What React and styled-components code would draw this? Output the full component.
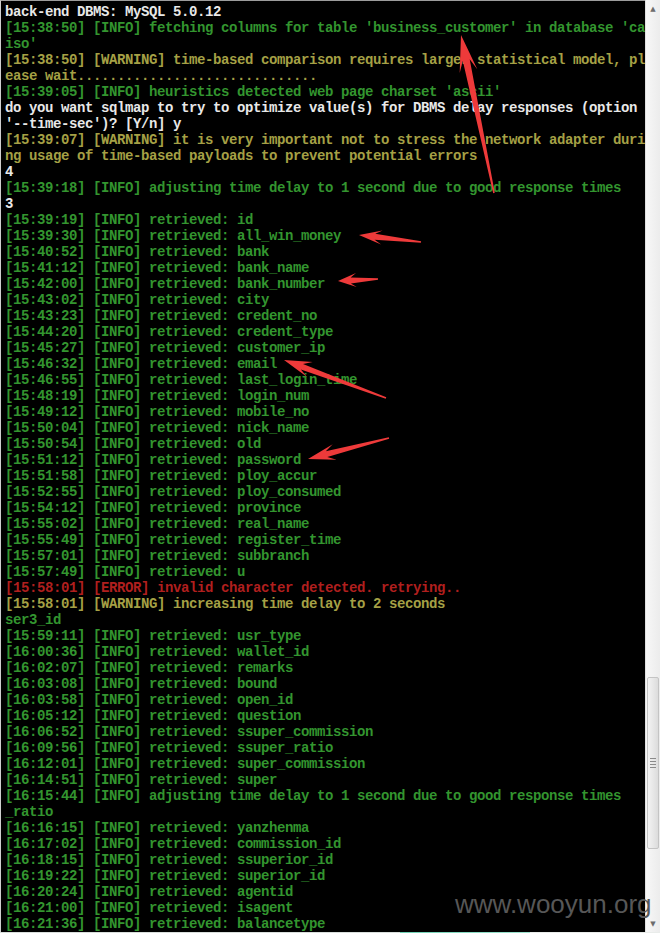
import React from 'react';
import styled, { createGlobalStyle } from 'styled-components';

const GlobalStyle = createGlobalStyle`
  html, body {
    margin: 0;
    padding: 0;
    background: #000;
  }
`;

const tones = {
  white: '#e8e8e8',
  green: '#33952f',
  yellow: '#a5a045',
  red: '#b01f1e',
};

const Window = styled.div`
  position: relative;
  width: 660px;
  height: 933px;
  overflow: hidden;
  display: flex;
  flex-direction: column;
  background: #000;
`;

const Body = styled.div`
  flex: 1;
  display: flex;
  min-height: 0;
`;

const Console = styled.div`
  flex: 1;
  border-top: 1px solid #9c9c9c;
  border-left: 1px solid #cfcfcf;
  padding: 3px 0 0 4px;
  background: #000;
  overflow: hidden;
  font-family: "Liberation Mono", "DejaVu Sans Mono", monospace;
  font-weight: bold;
  font-size: 14px;
  letter-spacing: -0.4px;
  line-height: 16px;
`;

const Line = styled.div`
  height: 16px;
  white-space: pre;
  color: ${(p) => tones[p.$tone]};
`;

const Scrollbar = styled.div`
  width: 14px;
  display: flex;
  flex-direction: column;
  background: linear-gradient(to right, #f7f7f7, #ececec);
  border-left: 1px solid #e0e0e0;
`;

const ArrowButton = styled.div`
  height: 17px;
  display: flex;
  align-items: center;
  justify-content: center;
  color: #6c6c6c;
  font-family: "DejaVu Sans", sans-serif;
  font-size: 7px;
`;

const Track = styled.div`
  flex: 1;
  display: flex;
  flex-direction: column;
`;

const TrackGap = styled.div`
  height: ${(p) => p.$h}px;
`;

const Thumb = styled.div`
  height: 170px;
  margin: 0 1px;
  border: 1px solid #c4c4c4;
  border-radius: 2px;
  background: linear-gradient(to right, #f3f3f3, #dcdcdc);
  display: flex;
  flex-direction: column;
  align-items: center;
  justify-content: center;
  gap: 2px;
`;

const Grip = styled.span`
  width: 6px;
  height: 1px;
  background: #8a8a8a;
`;

const BottomEdge = styled.div`
  height: 1px;
  background: linear-gradient(
    to right,
    #d9dfdc 0,
    #d9dfdc 400px,
    #6fd1b4 400px,
    #9fe3cf 530px,
    #e9ecea 530px
  );
`;

const Watermark = styled.div`
  position: absolute;
  left: 455px;
  top: 891px;
  font-family: "Liberation Sans", Arial, sans-serif;
  font-size: 26px;
  line-height: 26px;
  color: #575757;
  pointer-events: none;
`;

const Overlay = styled.svg`
  position: absolute;
  left: 0;
  top: 0;
  pointer-events: none;
`;

const retrieved = (t, name) => ({ tone: 'green', text: `[${t}] [INFO] retrieved: ${name}` });

const lines = [
  { tone: 'white', text: 'back-end DBMS: MySQL 5.0.12' },
  { tone: 'green', text: "[15:38:50] [INFO] fetching columns for table 'business_customer' in database 'ca" },
  { tone: 'green', text: "iso'" },
  { tone: 'yellow', text: '[15:38:50] [WARNING] time-based comparison requires larger statistical model, pl' },
  { tone: 'yellow', text: 'ease wait..............................' },
  { tone: 'green', text: "[15:39:05] [INFO] heuristics detected web page charset 'ascii'" },
  { tone: 'white', text: 'do you want sqlmap to try to optimize value(s) for DBMS delay responses (option' },
  { tone: 'white', text: "'--time-sec')? [Y/n] y" },
  { tone: 'yellow', text: '[15:39:07] [WARNING] it is very important not to stress the network adapter duri' },
  { tone: 'yellow', text: 'ng usage of time-based payloads to prevent potential errors' },
  { tone: 'white', text: '4' },
  { tone: 'green', text: '[15:39:18] [INFO] adjusting time delay to 1 second due to good response times' },
  { tone: 'white', text: '3' },
  retrieved('15:39:19', 'id'),
  retrieved('15:39:30', 'all_win_money'),
  retrieved('15:40:52', 'bank'),
  retrieved('15:41:12', 'bank_name'),
  retrieved('15:42:00', 'bank_number'),
  retrieved('15:43:02', 'city'),
  retrieved('15:43:23', 'credent_no'),
  retrieved('15:44:20', 'credent_type'),
  retrieved('15:45:27', 'customer_ip'),
  retrieved('15:46:32', 'email'),
  retrieved('15:46:55', 'last_login_time'),
  retrieved('15:48:19', 'login_num'),
  retrieved('15:49:12', 'mobile_no'),
  retrieved('15:50:04', 'nick_name'),
  retrieved('15:50:54', 'old'),
  retrieved('15:51:12', 'password'),
  retrieved('15:51:58', 'ploy_accur'),
  retrieved('15:52:55', 'ploy_consumed'),
  retrieved('15:54:12', 'province'),
  retrieved('15:55:02', 'real_name'),
  retrieved('15:55:49', 'register_time'),
  retrieved('15:57:01', 'subbranch'),
  retrieved('15:57:49', 'u'),
  { tone: 'red', text: '[15:58:01] [ERROR] invalid character detected. retrying..' },
  { tone: 'yellow', text: '[15:58:01] [WARNING] increasing time delay to 2 seconds' },
  { tone: 'green', text: 'ser3_id' },
  retrieved('15:59:11', 'usr_type'),
  retrieved('16:00:36', 'wallet_id'),
  retrieved('16:02:07', 'remarks'),
  retrieved('16:03:08', 'bound'),
  retrieved('16:03:58', 'open_id'),
  retrieved('16:05:12', 'question'),
  retrieved('16:06:52', 'ssuper_commission'),
  retrieved('16:09:56', 'ssuper_ratio'),
  retrieved('16:12:01', 'super_commission'),
  retrieved('16:14:51', 'super'),
  { tone: 'green', text: '[16:15:44] [INFO] adjusting time delay to 1 second due to good response times' },
  { tone: 'green', text: '_ratio' },
  retrieved('16:16:15', 'yanzhenma'),
  retrieved('16:17:02', 'commission_id'),
  retrieved('16:18:15', 'ssuperior_id'),
  retrieved('16:19:22', 'superior_id'),
  retrieved('16:20:24', 'agentid'),
  retrieved('16:21:00', 'isagent'),
  retrieved('16:21:36', 'balancetype'),
];

// hand-drawn red arrows: tip, tail, head length, barb half-width, neck half-width
const arrows = [
  { tip: [461, 35], tail: [494, 193], len: 32, barb: 9, neck: 3.5 },
  { tip: [359, 235], tail: [421, 242], len: 20, barb: 7, neck: 3 },
  { tip: [338, 281], tail: [378, 279], len: 16, barb: 7, neck: 3 },
  { tip: [284, 360], tail: [386, 398], len: 24, barb: 8, neck: 3 },
  { tip: [308, 459], tail: [389, 438], len: 24, barb: 8, neck: 3 },
];

function arrowPoints({ tip, tail, len, barb, neck }) {
  const dx = tip[0] - tail[0];
  const dy = tip[1] - tail[1];
  const d = Math.hypot(dx, dy);
  const ux = dx / d;
  const uy = dy / d;
  const px = -uy;
  const py = ux;
  const at = (back, side) => [tip[0] - ux * back + px * side, tip[1] - uy * back + py * side];
  const pts = [
    tip,
    at(len * 1.15, barb),
    at(len * 0.8, neck),
    [tail[0] + px * 0.8, tail[1] + py * 0.8],
    [tail[0] - px * 0.8, tail[1] - py * 0.8],
    at(len * 0.8, -neck),
    at(len * 1.15, -barb),
  ];
  return pts.map((p) => `${p[0].toFixed(1)},${p[1].toFixed(1)}`).join(' ');
}

const App = () => {
  return (
    <>
      <GlobalStyle />
      <Window>
        <Body>
          <Console>
            {lines.map((l, i) => (
              <Line key={i} $tone={l.tone}>{l.text}</Line>
            ))}
          </Console>
          <Scrollbar>
            <ArrowButton>▲</ArrowButton>
            <Track>
              <TrackGap $h={660} />
              <Thumb>
                <Grip />
                <Grip />
                <Grip />
                <Grip />
              </Thumb>
            </Track>
            <ArrowButton>▼</ArrowButton>
          </Scrollbar>
        </Body>
        <BottomEdge />
        <Overlay width="660" height="933" viewBox="0 0 660 933">
          {arrows.map((a, i) => (
            <polygon key={i} points={arrowPoints(a)} fill="#ee3a3a" />
          ))}
        </Overlay>
        <Watermark>www.wooyun.org</Watermark>
      </Window>
    </>
  );
};

export default App;
